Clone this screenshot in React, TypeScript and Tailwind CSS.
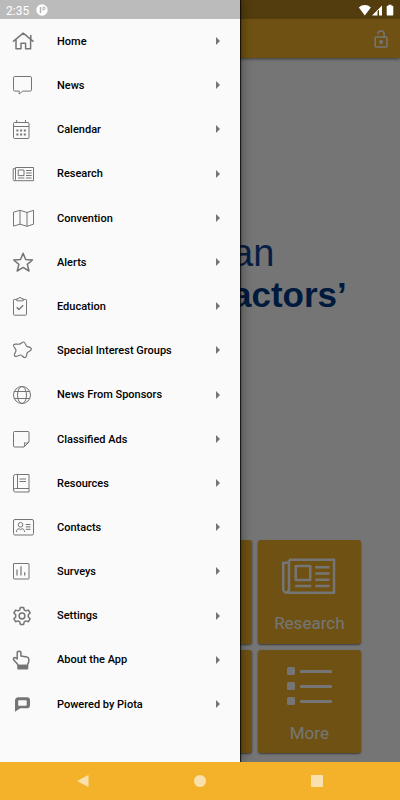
import type { ReactNode } from 'react';

interface MenuItem {
  label: string;
  icon: ReactNode;
}

interface IconProps {
  children: ReactNode;
  /** Thicker outline for the bolder icons */
  bold?: boolean;
}

function Icon({ children, bold }: IconProps) {
  return (
    <svg
      viewBox="0 0 24 24"
      className="size-6 shrink-0"
      fill="none"
      stroke="currentColor"
      strokeWidth={bold ? 1.5 : 1}
      strokeLinejoin="round"
      aria-hidden="true"
    >
      {children}
    </svg>
  );
}

/** Newspaper, used both in the menu and on the Research tile */
const newspaper = (
  <>
    <path d="M3.5 5.5h18v13.2H2.6a1.4 1.4 0 0 1-1.4-1.4V6.7h2.3M3.5 5.5v11.8a1.4 1.4 0 0 1-1 1.3" />
    <path d="M6.2 8h5.8v5.6H6.2z" />
    <path d="M14 8.5h5.7M14 11h5.7M14 13.5h5.7M14 16h5.7M6 16h6.4" />
  </>
);

const menuItems: MenuItem[] = [
  {
    label: 'Home',
    icon: (
      <Icon bold>
        <path d="M1 12.6 11.2 4.2l10.3 8.4M4 10.8v8.9h5v-5.4h4.6v5.4h5v-8.9M18.8 10V6" />
      </Icon>
    ),
  },
  {
    label: 'News',
    icon: (
      <Icon>
        <path d="M2.8 3.5h15.4a1.3 1.3 0 0 1 1.3 1.3v12a1.3 1.3 0 0 1-1.3 1.3h-7.4L7.2 21v-2.9H2.8a1.3 1.3 0 0 1-1.3-1.3v-12a1.3 1.3 0 0 1 1.3-1.3z" />
      </Icon>
    ),
  },
  {
    label: 'Calendar',
    icon: (
      <Icon>
        <rect x="1.5" y="5.5" width="15.5" height="16" rx="1" />
        <path d="M1.5 9.5H17M4.7 3v2.5M13.5 3v2.5" />
        <path strokeWidth="2" d="M4.4 13.5h2M8.1 13.5h2M11.8 13.5h2M4.4 17.5h2M8.1 17.5h2M11.8 17.5h2" />
      </Icon>
    ),
  },
  { label: 'Research', icon: <Icon>{newspaper}</Icon> },
  {
    label: 'Convention',
    icon: (
      <Icon>
        <path d="M1.5 6.2 8 4.3l7 2.2 6.5-2.2v13.9L15 20.3l-7-2.1-6.5 1.9zM8 4.3v13.9M15 6.5v13.8" />
      </Icon>
    ),
  },
  {
    label: 'Alerts',
    icon: (
      <Icon bold>
        <path d="m11.1 3.3 2.6 6.2 6.8.5-5.2 4.4 1.7 6.6-5.9-3.6L5.2 21l1.7-6.6L1.7 10l6.8-.5z" />
      </Icon>
    ),
  },
  {
    label: 'Education',
    icon: (
      <Icon>
        <path d="M4.8 5.5H2.2a.7.7 0 0 0-.7.7v14.3c0 .4.3.7.7.7h11.6c.4 0 .7-.3.7-.7V6.2a.7.7 0 0 0-.7-.7h-2.6" />
        <path d="M4.8 6.8V4.7h1.9a1.3 1.3 0 0 1 2.6 0h1.9v2.1z" />
        <path strokeWidth="1.3" d="m4.7 13.3 2.2 2.2 4.3-4.3" />
      </Icon>
    ),
  },
  {
    label: 'Special Interest Groups',
    icon: (
      <Icon>
        <path
          strokeWidth="1.2"
          d="M7.2 6.2C9 6 10 4 11.5 4c2.1 0 1.7 3.1 3.2 4.2 1.5 1 4.8.8 4.6 3.2-.2 2-3.7 2.2-4.3 3.9-.5 1.7 0 4.1-2 4.300S10.400 17.200 8.700 17c-1.700-.2-4.100 2.600-5.900 1-1.600-1.700 1.200-3.700 1.200-5.600S.6 8.700 1.600 6.900c1-1.700 3.600-.4 5.600-.7z"
        />
      </Icon>
    ),
  },
  {
    label: 'News From Sponsors',
    icon: (
      <Icon>
        <circle cx="10" cy="12" r="8.5" />
        <ellipse cx="10" cy="12" rx="4.5" ry="8.5" />
        <path d="M2 8.5h16M2 15.5h16" />
      </Icon>
    ),
  },
  {
    label: 'Classified Ads',
    icon: (
      <Icon>
        <path d="M2.5 4.5H16a1 1 0 0 1 1 1V15l-5 5H2.5a1 1 0 0 1-1-1V5.5a1 1 0 0 1 1-1zM11.8 20c1-1.2 1.2-2.5.6-4.2 1.5.6 3.4.4 4.6-.8" />
      </Icon>
    ),
  },
  {
    label: 'Resources',
    icon: (
      <Icon>
        <path d="M17 17.5v-14H3.5a2 2 0 0 0-2 2v13.7A1.8 1.8 0 0 0 3.3 21H17v-3.500H3.300a1.800 1.800 0 0 0-1.800 1.700M5.500 3.500v14M7.500 8H14M7.500 10.500H14" />
      </Icon>
    ),
  },
  {
    label: 'Contacts',
    icon: (
      <Icon>
        <rect x="1.5" y="4.5" width="20" height="15.5" rx="1.5" />
        <circle cx="8.5" cy="9.8" r="2.3" />
        <path d="M4.5 17c0-2 .6-2.9 2.5-3.300l1.500 1 1.500-1c1.900.4 2.500 1.300 2.500 3.300M13.800 9.500h4.700M13.800 11.900h4.700M13.800 14.300h4.700" />
      </Icon>
    ),
  },
  {
    label: 'Surveys',
    icon: (
      <Icon>
        <rect x="1.5" y="4.5" width="15.5" height="15.5" rx=".5" />
        <path strokeWidth="1.2" d="M5 16.5v-6M9 16.5V7.300M12.700 16.500v-3.300" />
      </Icon>
    ),
  },
  {
    label: 'Settings',
    icon: (
      <Icon bold>
        <path d="M8.4 3.5h3.2l.6 2.4 1.8 1 2.4-.8 1.7 2.9-1.8 1.8V13l1.8 1.8-1.7 2.9-2.4-.8-1.8 1-.6 2.5H8.4l-.6-2.500-1.800-1-2.400.8-1.700-2.900L3.700 13v-2.200L1.900 9l1.700-2.900 2.400.8 1.800-1z" />
        <circle cx="10" cy="12" r="2.9" />
      </Icon>
    ),
  },
  {
    label: 'About the App',
    icon: (
      <Icon bold>
        <path d="M5.2 11V5c0-2.200 3.700-2.200 3.700 0v3.100l6 .8c1.300.2 1.900.9 1.900 2.100v2.200c0 1.700-1.200 2.300-1.300 4.300H6c-.2-2-1.700-2.600-2.900-4l-1.400-1.700c-.9-1.500.6-2.900 2.100-1.900z" />
        <path fill="currentColor" d="M6 17.5h9.500v3.200H6z" />
      </Icon>
    ),
  },
  {
    label: 'Powered by Piota',
    icon: (
      <Icon>
        <path
          fill="currentColor"
          fillRule="evenodd"
          stroke="none"
          d="M6.500 5.300H15a3 3 0 0 1 3 3v4.900a3 3 0 0 1-3 3H8.300L3 19.800V8.800a3.500 3.500 0 0 1 3.500-3.500zM7.200 8.200c-.6 0-1 .4-1 1v4.600h7.400c.7 0 1.100-.4 1.100-1.100V9.200c0-.6-.4-1-1.100-1z"
        />
      </Icon>
    ),
  },
];

function StatusBar() {
  return (
    <div className="absolute inset-x-0 top-0 flex h-[19px] items-center bg-black/25 pr-1.5 pl-1.5 text-white">
      <span className="pt-0.5 text-[12px]">2:35</span>
      <svg viewBox="0 0 12 12" className="ml-[7px] size-3" aria-hidden="true">
        <circle cx="6" cy="6" r="5.7" fill="currentColor" />
        <path d="M4.5 3v6.200" fill="none" stroke="#b5b5b5" strokeWidth="1.5" />
        <path d="M7 6.500V3h1a1.200 1.200 0 0 1 0 2.500H7" fill="none" stroke="#b5b5b5" />
      </svg>
      <svg viewBox="0 0 36 12" className="ml-auto h-3 w-9" fill="currentColor" aria-hidden="true">
        <path d="M.8 3.600a8.500 8.500 0 0 1 12 0L6.800 11.500z" />
        <path d="M14 11.500 24 1.500v10H21V5.800l-1.500 1.500v4.200zM21.700 6h1v5h-1z" />
        <path d="M30.500 1.700V.8h3v.9h1c.4 0 .8.300.8.800v8.200c0 .5-.4.800-.8.800h-5a.8.8 0 0 1-.8-.8V2.500c0-.5.3-.8.8-.8z" />
      </svg>
    </div>
  );
}

function Drawer() {
  return (
    <nav className="absolute inset-y-0 left-0 flex w-3/5 flex-col bg-[#fafafa] pt-[19px] pb-9 shadow-[1px_0_1px_rgba(0,0,0,0.7),2px_0_10px_rgba(0,0,0,0.35)]">
      {menuItems.map(({ label, icon }) => (
        <a key={label} href="#" className="flex flex-1 items-center pr-5 pl-3 text-[#757575]">
          {icon}
          <span className="ml-[21px] flex-1 pt-0.5 text-[11px] font-medium text-black">{label}</span>
          <svg viewBox="0 0 4 8" className="h-2 w-1" fill="currentColor" aria-hidden="true">
            <path d="M0 0l4 4-4 4z" />
          </svg>
        </a>
      ))}
    </nav>
  );
}

const tileClass =
  'flex aspect-square flex-col items-center rounded-[3px] bg-[#f2b02a] text-white shadow-[0_1px_2px_rgba(0,0,0,0.5)]';

function HomePage() {
  return (
    <div className="flex flex-1 flex-col bg-white">
      <header className="flex h-[58px] items-center justify-end bg-[#f2b02a] pt-[19px] pr-2.5 text-white shadow-[0_1px_3px_rgba(0,0,0,0.5)]">
        <button aria-label="Unlock">
          <svg viewBox="0 0 18 20" className="h-5 w-[18px]" fill="none" stroke="currentColor" strokeWidth="1.5">
            <path d="M6 5.200a3.100 3.100 0 0 1 6.200 0V8" />
            <rect x="3.200" y="8" width="11.800" height="10" rx="1" />
            <circle cx="9.100" cy="13" r="1.200" fill="currentColor" />
          </svg>
        </button>
      </header>

      <div className="flex flex-1 flex-col justify-center pb-[50px] pl-[58%] font-['Liberation_Sans',sans-serif] leading-[42px]">
        <p className="text-[38px] text-[#0f4494]">an</p>
        <p className="text-[35px] font-bold text-[#003a86]">actors’</p>
      </div>

      <div className="grid grid-cols-3 gap-1.5 px-[39px] pb-[9px]">
        <div className={tileClass} />
        <div className={tileClass} />
        <button className={tileClass}>
          <svg
            viewBox="0 4 23 16"
            className="mt-4 h-10 w-[58px]"
            fill="none"
            stroke="currentColor"
            strokeLinejoin="round"
            aria-hidden="true"
          >
            {newspaper}
          </svg>
          <span className="mt-[15px] text-[17px] leading-6">Research</span>
        </button>
        <div className={tileClass} />
        <div className={tileClass} />
        <button className={tileClass}>
          <svg viewBox="0 0 46 40" className="mt-4 h-10 w-[46px]" fill="currentColor" aria-hidden="true">
            {[1, 16, 31].map((y) => (
              <g key={y}>
                <rect x="1" y={y} width="8" height="8" rx="1.5" />
                <rect x="14" y={y + 3} width="32" height="3" rx="1" />
              </g>
            ))}
          </svg>
          <span className="mt-[15px] text-[17px] leading-6">More</span>
        </button>
      </div>
    </div>
  );
}

function SystemNav() {
  return (
    <div className="grid h-[38px] grid-cols-3 place-items-center bg-[#f3b229] px-6 text-[#fae0ac]">
      <button aria-label="Back">
        <svg viewBox="0 0 12 12" className="size-3" fill="currentColor">
          <path d="M0 6 11.500 0v12z" />
        </svg>
      </button>
      <button aria-label="Home" className="size-3 rounded-full bg-current" />
      <button aria-label="Overview" className="size-3 rounded-[1px] bg-current" />
    </div>
  );
}

export default function App() {
  return (
    <div className="flex min-h-screen flex-col font-[Roboto,sans-serif]">
      <div className="relative flex flex-1 flex-col overflow-hidden">
        <HomePage />
        {/* Scrim behind the open drawer */}
        <div className="absolute inset-0 bg-black/54" />
        <Drawer />
        <StatusBar />
      </div>
      <SystemNav />
    </div>
  );
}
